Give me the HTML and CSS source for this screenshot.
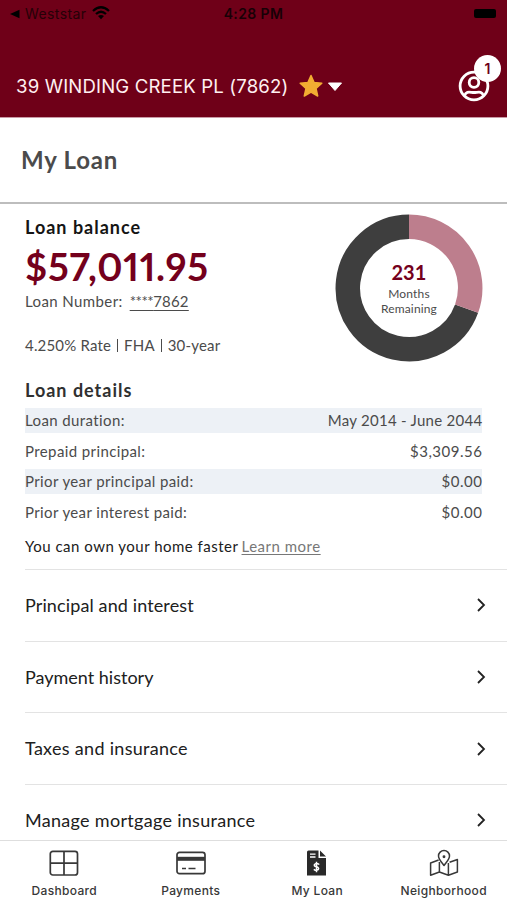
FILE: index.html
```html
<!DOCTYPE html>
<html lang="en">
<head>
<meta charset="utf-8">
<meta name="viewport" content="width=device-width, initial-scale=1">
<title>My Loan</title>
<link rel="stylesheet" href="styles.css">
</head>
<body>
<div class="app">
  <header class="header">
    <div class="status">
      <div class="status-left">
        <svg width="10" height="10" viewBox="0 0 10 10"><path d="M0 5 9.500.8v8.400z"/></svg>
        <span class="carrier">Weststar</span>
        <svg class="wifi" width="18" height="14" viewBox="0 0 18 14"><path d="M1 5Q9-2.400 17 5M4 8q5-4.600 10 0" fill="none" stroke="#000" stroke-width="2.300"/><path d="m9 13.200-3-3.100q3-2.300 6 0z"/></svg>
      </div>
      <time class="clock">4:28 PM</time>
      <span class="battery"></span>
    </div>
    <div class="property">
      <span class="address">39 WINDING CREEK PL (7862)</span>
      <svg class="star" width="24" height="24" viewBox="0 0 24 24"><path d="m12 1.500 3.100 7 7.700.7-5.800 5.200 1.700 7.600-6.700-3.900L5.300 22 7 14.400 1.200 9.200l7.700-.7z" fill="#f2ad32" stroke="#f2ad32" stroke-width="1.500" stroke-linejoin="round"/></svg>
      <svg class="caret" width="16" height="10" viewBox="0 0 16 10"><path d="M1.500 1h13L8 8.500z" fill="#fff" stroke="#fff" stroke-linejoin="round"/></svg>
      <div class="profile">
        <svg width="32" height="32" viewBox="0 0 32 32" fill="none" stroke="#fff" stroke-width="2.800"><circle cx="16" cy="16" r="13.900"/><circle cx="16" cy="12.500" r="4.800"/><path d="M6.500 25.500c2-5 5.500-3 9.500-3s7.500-2 9.500 3"/></svg>
        <span class="badge">1</span>
      </div>
    </div>
  </header>
  <div class="title"><h1>My Loan</h1></div>
  <main class="content">
    <section class="summary">
      <div class="balance">
        <h2>Loan balance</h2>
        <div class="amount">$57,011.95</div>
        <div class="number"><span>Loan Number:</span><a><span class="mask">****</span>7862</a></div>
        <div class="terms">4.250% Rate <i></i> FHA <i></i> 30-year</div>
      </div>
      <div class="donut">
        <svg width="148" height="148" viewBox="0 0 148 148" fill="none" stroke-width="24.500"><path d="M131.600 94.700A61.200 61.200 0 1 1 74 12.800" stroke="#3e3e3e"/><path d="M74 12.800A61.200 61.200 0 0 1 131.600 94.700" stroke="#bd7e8d"/></svg>
        <div class="donut-label"><strong>231</strong><span>Months</span><span>Remaining</span></div>
      </div>
    </section>
    <section class="details">
      <h2>Loan details</h2>
      <dl>
        <div class="row"><dt>Loan duration:</dt><dd class="period">May 2014 - June 2044</dd></div>
        <div class="row"><dt>Prepaid principal:</dt><dd>$3,309.56</dd></div>
        <div class="row"><dt>Prior year principal paid:</dt><dd>$0.00</dd></div>
        <div class="row"><dt>Prior year interest paid:</dt><dd>$0.00</dd></div>
      </dl>
      <p class="tip"><span>You can own your home faster</span> <a>Learn more</a></p>
    </section>
    <nav class="links">
      <a><span class="mid">Principal and interest</span><svg width="10" height="16" viewBox="0 0 10 16"><path d="m2 2 6 6-6 6"/></svg></a>
      <a><span class="snug">Payment history</span><svg width="10" height="16" viewBox="0 0 10 16"><path d="m2 2 6 6-6 6"/></svg></a>
      <a><span>Taxes and insurance</span><svg width="10" height="16" viewBox="0 0 10 16"><path d="m2 2 6 6-6 6"/></svg></a>
      <a><span>Manage mortgage insurance</span><svg width="10" height="16" viewBox="0 0 10 16"><path d="m2 2 6 6-6 6"/></svg></a>
    </nav>
  </main>
  <nav class="tabs">
    <a><svg width="30" height="28" viewBox="0 0 30 28" fill="none" stroke="#383838" stroke-width="1.700"><rect x="1.300" y="2.300" width="27.200" height="23.700" rx="2.500"/><path d="M15 2.300V26M1.300 14.200h27.200"/></svg><span>Dashboard</span></a>
    <a><svg width="30" height="28" viewBox="0 0 30 28" fill="none" stroke="#383838" stroke-width="1.700"><rect x="1" y="3.300" width="28" height="21.400" rx="2.500"/><path d="M1 9.800h28" stroke-width="4"/><path d="M6 19.500h4m2.500 0h7"/></svg><span>Payments</span></a>
    <a><svg width="30" height="28" viewBox="0 0 30 28"><path d="M6.500 1.500h10V9H24v17.500H5V3q0-1.500 1.500-1.500zM18 1.500 24 7.600h-6z" fill="#292929"/><path d="M8 5.200h5.500M8 8h5.500" stroke="#fff" stroke-width="1.300"/><path d="M17.300 15.500q-2.500-1.700-4.300-.5c-1.700 1.300-.3 2.400 1.400 2.800s3 1.400 1.700 2.900c-1.300 1-3.200.4-4.300-.4M14.500 12.800v10.400" fill="none" stroke="#fff" stroke-width="1.500"/></svg><span>My Loan</span></a>
    <a><svg width="30" height="28" viewBox="0 0 30 28" fill="none" stroke="#383838" stroke-width="1.500" stroke-linejoin="round"><path d="m9.600 11-8 3v12.200l8.800-3.200 9 3.200 9-3.200V10.500l-7.800 2.700M10.400 13v10M19.400 14v12.200"/><path d="M15 16.500c-2-3-5.500-6-5.500-9.500a5.500 5.500 0 0 1 11 0c0 3.500-3.500 6.500-5.500 9.500z"/><circle cx="15" cy="7.800" r=".7" fill="#383838"/></svg><span>Neighborhood</span></a>
  </nav>
</div>
</body>
</html>
```
FILE: styles.css
```css
* { box-sizing: border-box; margin: 0; padding: 0; }
body { width: 507px; height: 900px; overflow: hidden; background: #fff; color: #4b4b4b; font-family: Lato, sans-serif; font-size: 15px; font-variant-ligatures: none; }
svg { display: block; flex: none; }
span, dt, dd, a, h1, h2, time { white-space: nowrap; }
.app { display: flex; flex-direction: column; height: 900px; }
.header { flex: none; height: 118px; background: #6f0018; border-bottom: 1px solid #c99aa5; font-family: Inter, sans-serif; }
.status { display: grid; grid-template-columns: 1fr auto 1fr; align-items: center; height: 28px; padding: 0 12px 0 10px; color: #180006; }
.status-left { display: flex; align-items: center; }
.carrier { margin-left: 5px; margin-top: -1px; font-size: 14px; letter-spacing: .4px; color: #260007; }
.wifi { margin-left: 6px; margin-top: -2px; }
.clock { margin-left: 2px; margin-top: -1px; font-size: 14px; font-weight: 600; letter-spacing: .4px; }
.battery { justify-self: end; width: 22px; height: 9px; margin-right: -1px; margin-top: -1px; border-radius: 2px; background: #000; }
.property { display: flex; align-items: center; height: 60px; margin-top: 28px; padding: 0 17px 0 16px; }
.address { width: 272px; font-size: 18.600px; letter-spacing: .15px; color: #fff0f1; }
.star { margin-left: 11px; }
.caret { margin-left: 4px; margin-top: 2px; }
.profile { position: relative; margin-left: auto; }
.badge { position: absolute; left: 16px; top: -15px; width: 27px; height: 27px; border-radius: 50%; background: #fff; color: #6f0018; font-size: 14px; font-weight: 600; line-height: 27px; text-align: center; }
.title { flex: none; height: 86px; padding: 24px 21px 0; border-bottom: 2px solid #bdbdbd; }
.title h1 { font-size: 24px; line-height: 36px; font-weight: 700; letter-spacing: .75px; }
.content { flex: 1; min-height: 0; overflow: hidden; padding-left: 25px; }
.summary { display: flex; justify-content: space-between; height: 170px; padding: 10px 24px 0 0; }
.balance h2 { color: #151515; font-size: 18px; line-height: 26px; font-weight: 700; letter-spacing: 1px; }
.amount { color: #74001c; font-size: 38px; line-height: 48px; margin-top: 2px; font-weight: 700; font-variant-numeric: proportional-nums; letter-spacing: .7px; }
.number { display: flex; gap: 7px; line-height: 22px; letter-spacing: .4px; }
.number a { letter-spacing: .2px; text-decoration: underline; text-underline-offset: 3px; }
.mask { letter-spacing: -.5px; }
.terms { display: flex; gap: 4px; align-items: center; margin-top: 22px; line-height: 22px; letter-spacing: .18px; }
.terms i { width: 1px; height: 13px; margin: 0 2px; background: #4b4b4b; }
.donut { position: relative; width: 148px; height: 148px; }
.donut-label { position: absolute; inset: 0; display: flex; flex-direction: column; align-items: center; padding-top: 45px; font-size: 12px; line-height: 15px; letter-spacing: .15px; }
.donut-label strong { color: #74001c; font-size: 20px; line-height: 26px; font-weight: 700; margin-bottom: 1px; }
.details { height: 195px; padding: 3px 25px 0 0; }
.details h2 { font-size: 18px; line-height: 26px; color: #303030; letter-spacing: 1px; }
.row { display: flex; justify-content: space-between; height: 25px; margin-bottom: 5.5px; line-height: 25px; letter-spacing: .39px; }
.row dd { margin-right: -.4px; letter-spacing: .5px; }
.row .period { letter-spacing: .27px; }
.details dl { padding-top: 5px; }
.row:nth-child(odd) { background: #edf1f6; }
.tip { margin-top: 9.500px; line-height: 25px; color: #202020; letter-spacing: .5px; }
.tip a { margin-left: -1px; color: #777; text-decoration: underline; text-underline-offset: 2px; }
.links a { display: flex; align-items: center; justify-content: space-between; height: 71.700px; padding-right: 21px; border-top: 1px solid #e3e3e3; color: #202020; font-size: 18px; }
.links span { margin-top: -1px; letter-spacing: .3px; }
.links .mid { letter-spacing: .12px; }
.links .snug { letter-spacing: 0; }
.links path { fill: none; stroke: #222; stroke-width: 1.800; }
.tabs { flex: none; display: grid; grid-template-columns: repeat(4, 1fr); height: 60px; padding-left: 1px; border-top: 1px solid #dedede; background: #fff; }
.tabs a { display: flex; flex-direction: column; align-items: center; padding-top: 8px; color: #383838; font: 500 12px/18px Inter, sans-serif; letter-spacing: .32px; }
.tabs span { margin-top: 5px; }
```
